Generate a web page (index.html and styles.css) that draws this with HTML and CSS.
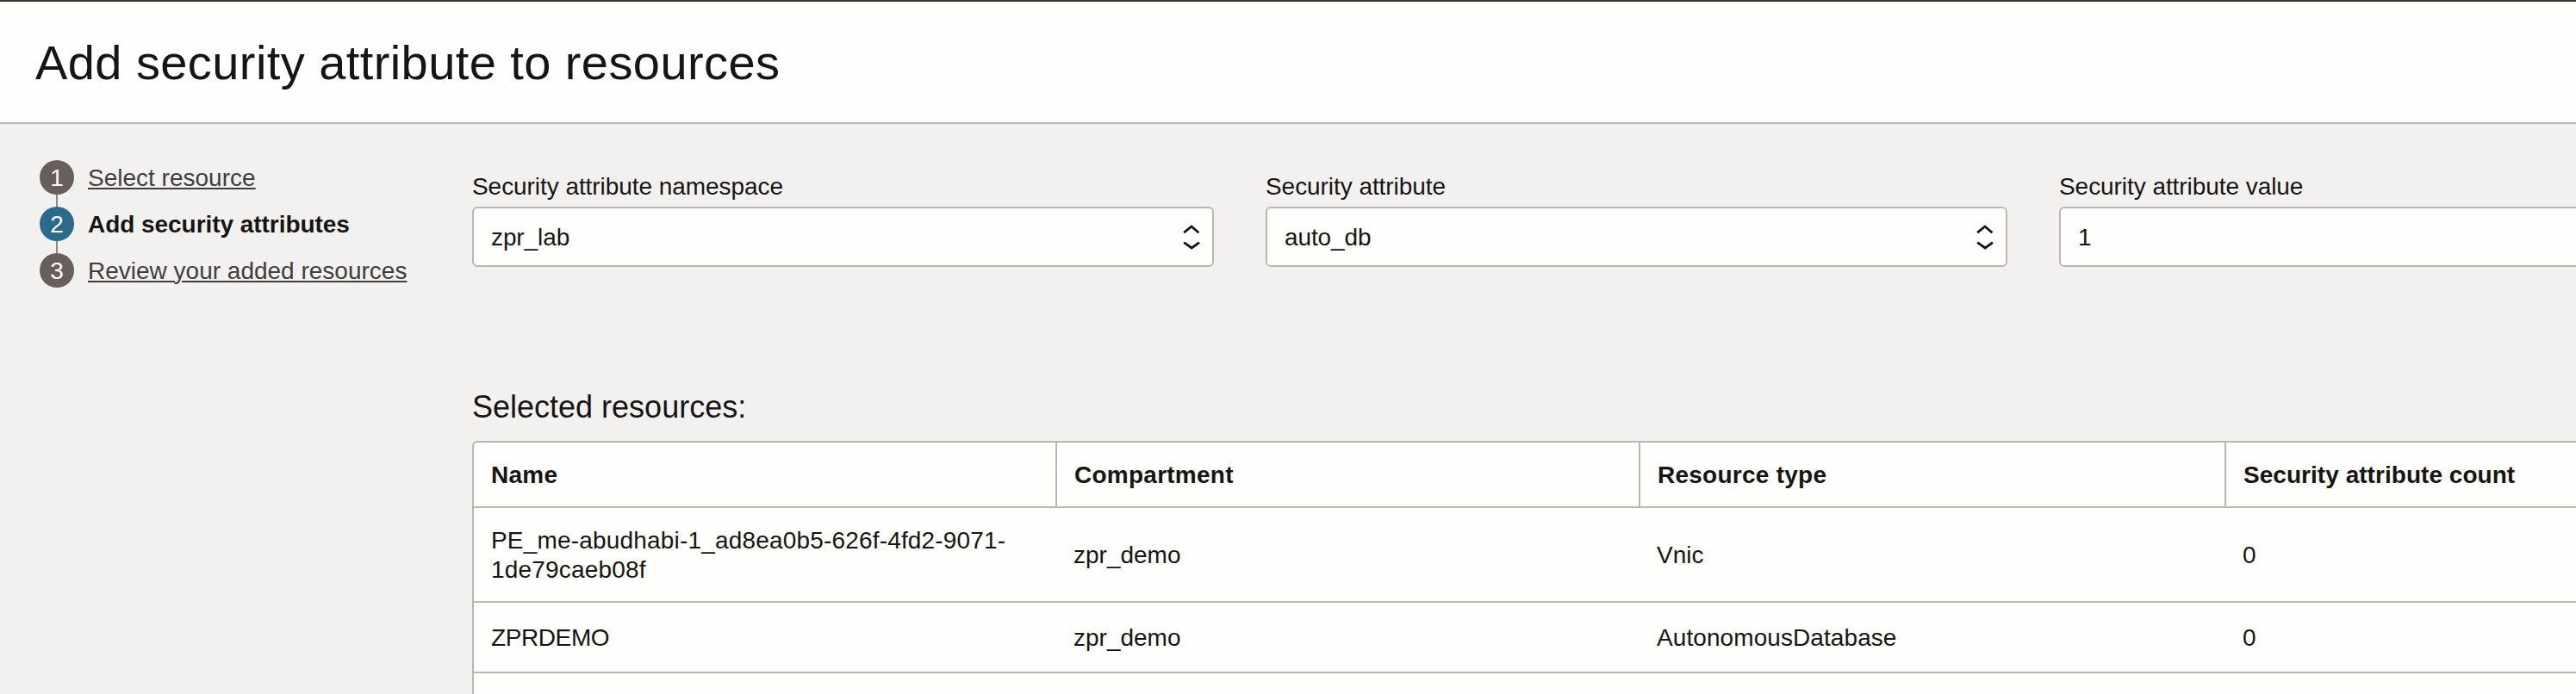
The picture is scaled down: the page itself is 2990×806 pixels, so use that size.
FILE: index.html
```html
<!DOCTYPE html>
<html lang="en">
<head>
<meta charset="utf-8">
<title>Add security attribute to resources</title>
<link rel="stylesheet" href="styles.css">
</head>
<body>
<header class="page-header">
  <h1 class="page-title">Add security attribute to resources</h1>
</header>
<main class="page-body">
  <nav class="steps">
    <div class="step"><span class="step-num">1</span><a class="step-link">Select resource</a></div>
    <div class="step"><span class="step-num step-num-active">2</span><span class="step-current">Add security attributes</span></div>
    <div class="step"><span class="step-num">3</span><a class="step-link">Review your added resources</a></div>
  </nav>
  <section class="content">
    <div class="fields">
      <div class="field">
        <label class="field-label">Security attribute namespace</label>
        <div class="select"><span>zpr_lab</span>
          <svg class="chevrons" width="20" height="30" viewBox="0 0 20 30"><path d="M1.2 10.2 10 3l8.4 7.2M1.2 21.6 10.2 28l8.8-6.4"/></svg>
        </div>
      </div>
      <div class="field">
        <label class="field-label">Security attribute</label>
        <div class="select"><span>auto_db</span>
          <svg class="chevrons" width="20" height="30" viewBox="0 0 20 30"><path d="M1.2 10.2 10 3l8.4 7.2M1.2 21.6 10.2 28l8.8-6.4"/></svg>
        </div>
      </div>
      <div class="field">
        <label class="field-label">Security attribute value</label>
        <div class="select"><span>1</span></div>
      </div>
    </div>
    <h2 class="section-title">Selected resources:</h2>
    <div class="table">
      <div class="row row-head"><div class="cell">Name</div><div class="cell">Compartment</div><div class="cell">Resource type</div><div class="cell cell-count">Security attribute count</div></div>
      <div class="row row-tall"><div class="cell cell-id">PE_me-abudhabi-1_ad8ea0b5-626f-4fd2-9071-<br>1de79caeb08f</div><div class="cell">zpr_demo</div><div class="cell">Vnic</div><div class="cell">0</div></div>
      <div class="row"><div class="cell cell-caps">ZPRDEMO</div><div class="cell">zpr_demo</div><div class="cell cell-type">AutonomousDatabase</div><div class="cell">0</div></div>
      <div class="table-foot"></div>
    </div>
  </section>
</main>
</body>
</html>
```
FILE: styles.css
```css
* { box-sizing: border-box; }
html, body { margin: 0; height: 806px; overflow: hidden; }
body {
  display: flex;
  flex-direction: column;
  background: #f3f1f0;
  color: #161513;
  font: 28px/34px "Liberation Sans", Arial, sans-serif;
}
.page-header {
  flex: none;
  display: flex;
  align-items: center;
  height: 144px;
  padding: 2px 0 0 41px;
  border-top: 2px solid #3a3430;
  border-bottom: 2px solid #bcb6b1;
  background: #fefefc;
}
.page-title { margin: 0; font-size: 56px; line-height: 64px; font-weight: 400; letter-spacing: 0.42px; }
.page-body { flex: 1; min-height: 0; display: flex; overflow: hidden; }
.steps {
  flex: none;
  width: 548px;
  padding: 42px 0 0 46px;
  display: flex;
  flex-direction: column;
  gap: 14px;
}
.step { position: relative; display: flex; gap: 16px; height: 40px; line-height: 42px; }
.step + .step::before {
  content: "";
  position: absolute;
  left: 19px;
  top: -14px;
  width: 2px;
  height: 14px;
  background: #8f8984;
}
.step-num { width: 40px; height: 40px; border-radius: 50%; background: #665f5b; color: #fefefc; text-align: center; }
.step-num-active { background: #2c6a8c; }
.step-link { color: #403e3c; text-decoration: underline; text-decoration-thickness: 2px; text-underline-offset: 2px; }
.step-current { font-weight: 700; letter-spacing: -0.05px; }
.content { flex: none; width: 2700px; padding-top: 56px; }
.fields { display: grid; grid-template-columns: repeat(3, 861px); gap: 60px; }
.field-label { display: block; margin-bottom: 6px; letter-spacing: -0.06px; }
.select {
  display: flex;
  align-items: center;
  justify-content: space-between;
  height: 70px;
  padding: 2px 14px 0 20px;
  border: 2px solid #bcb6b1;
  border-radius: 6px;
  background: #fefefc;
  letter-spacing: -0.1px;
}
.chevrons { fill: none; stroke: #161513; stroke-width: 2.8; margin-top: -3px; }
.section-title { margin: 143px 0 19px; font-size: 36px; line-height: 40px; font-weight: 400; }
.table { border: 2px solid #bcb6b1; border-radius: 6px; background: #fefefc; overflow: hidden; }
.row {
  display: grid;
  grid-template-columns: 677px 677px 680px 1fr;
  height: 82px;
  border-bottom: 2px solid #bcb6b1;
}
.row-tall { height: 110px; }
.cell { display: flex; align-items: center; padding: 2px 0 0 20px; }
.cell + .cell { padding-left: 19px; }
.cell-id { letter-spacing: 0.18px; }
.cell-caps { letter-spacing: -0.4px; }
.cell-type { letter-spacing: 0.08px; }
.row-head { height: 76px; font-weight: 700; letter-spacing: 0.25px; }
.row-head .cell { border-right: 2px solid #bcb6b1; }
.row-head .cell + .cell { padding-left: 20px; }
.row-head .cell-count { letter-spacing: 0.04px; }
.table-foot { height: 80px; }
```
